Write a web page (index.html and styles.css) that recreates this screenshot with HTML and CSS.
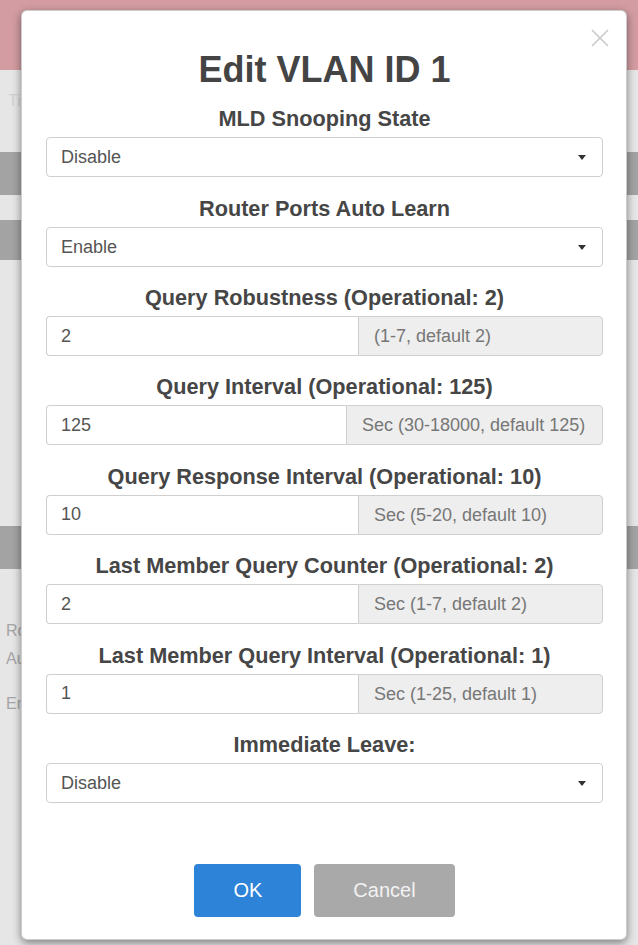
FILE: index.html
```
<!DOCTYPE html>
<html lang="en">
<head>
    <meta charset="UTF-8">
    <title>Edit VLAN ID 1</title>
    <link rel="stylesheet" href="styles.css">
</head>
<body>

    <!-- page behind the dialog -->
    <div class="page">
        <div class="topbar"></div>
        <div class="crumb">Tips</div>
        <div class="bar"></div>
        <div class="bar sub"></div>
        <div class="rows"></div>
        <div class="bar"></div>
        <div class="info">
            <p>Ro</p>
            <p>Au</p>
            <p class="gap">En</p>
        </div>
    </div>

    <div class="backdrop">
        <div class="modal">
            <a href="javascript:;" class="close">
                <svg width="18" height="18" viewBox="0 0 18 18"><path d="M1 1L17 17M17 1L1 17" stroke="#c9c9c9" stroke-width="1.6" fill="none"/></svg>
            </a>
            <h2 class="title">Edit VLAN ID 1</h2>

            <div class="group">
                <label>MLD Snooping State</label>
                <div class="select">Disable</div>
            </div>
            <div class="group">
                <label>Router Ports Auto Learn</label>
                <div class="select">Enable</div>
            </div>
            <div class="group">
                <label>Query Robustness (Operational: 2)</label>
                <div class="input-group">
                    <input type="text" value="2">
                    <span class="addon">(1-7, default 2)</span>
                </div>
            </div>
            <div class="group">
                <label>Query Interval (Operational: 125)</label>
                <div class="input-group">
                    <input type="text" value="125">
                    <span class="addon wide">Sec (30-18000, default 125)</span>
                </div>
            </div>
            <div class="group">
                <label>Query Response Interval (Operational: 10)</label>
                <div class="input-group">
                    <input type="text" value="10">
                    <span class="addon">Sec (5-20, default 10)</span>
                </div>
            </div>
            <div class="group">
                <label>Last Member Query Counter (Operational: 2)</label>
                <div class="input-group">
                    <input type="text" value="2">
                    <span class="addon">Sec (1-7, default 2)</span>
                </div>
            </div>
            <div class="group">
                <label>Last Member Query Interval (Operational: 1)</label>
                <div class="input-group">
                    <input type="text" value="1">
                    <span class="addon">Sec (1-25, default 1)</span>
                </div>
            </div>
            <div class="group">
                <label>Immediate Leave:</label>
                <div class="select">Disable</div>
            </div>

            <div class="actions">
                <button class="btn ok">OK</button>
                <button class="btn cancel">Cancel</button>
            </div>
        </div>
    </div>

</body>
</html>
```
FILE: styles.css
```
* {
    margin: 0;
    padding: 0;
    box-sizing: border-box;
}
body {
    width: 638px;
    height: 945px;
    overflow: hidden;
    position: relative;
    background: #e6e6e6;
    font-family: "Liberation Sans", Arial, sans-serif;
}

/* page under the overlay */
.topbar {
    height: 70px;
    background: #d29ca2;
}
.crumb {
    height: 82px;
    padding: 22px 8px;
    font-size: 16px;
    color: #d2d2d2;
}
.bar {
    height: 43px;
    background: #a3a3a3;
}
.bar.sub {
    height: 40px;
    margin-top: 25px;
}
.rows {
    height: 266px;
}
.info {
    padding: 48px 6px 0;
    font-size: 16px;
    line-height: 28px;
    color: #a5a5a5;
}
.info .gap {
    margin-top: 17px;
}

/* dialog */
.backdrop {
    position: absolute;
    top: 0;
    left: 0;
    right: 0;
    bottom: 0;
}
.modal {
    position: absolute;
    top: 10px;
    left: 21px;
    width: 606px;
    height: 930px;
    background: #fff;
    border: 1px solid rgba(0, 0, 0, .2);
    border-radius: 6px;
    box-shadow: 0 3px 9px rgba(0, 0, 0, .45);
    padding: 38.5px 23px 0 24px;
}
.close {
    position: absolute;
    top: 18px;
    right: 17px;
    width: 18px;
    height: 18px;
}
.close svg {
    display: block;
}
.title {
    font-size: 36px;
    line-height: 40px;
    font-weight: bold;
    text-align: center;
    color: #444;
    margin-bottom: 16.8px;
}
.group {
    margin-bottom: 18.4px;
}
.group label {
    display: block;
    text-align: center;
    font-size: 21.7px;
    font-weight: bold;
    line-height: 26px;
    color: #464646;
    margin-bottom: 5px;
}
.select {
    position: relative;
    height: 40px;
    border: 1px solid #cfcfcf;
    border-radius: 4px;
    padding: 0 14px;
    font-size: 18px;
    line-height: 38px;
    color: #555;
}
.select::after {
    content: "";
    position: absolute;
    right: 16px;
    top: 17px;
    border-left: 4px solid transparent;
    border-right: 4px solid transparent;
    border-top: 5px solid #333;
}
.input-group {
    display: flex;
    height: 40px;
}
.input-group input {
    flex: 1;
    min-width: 0;
    border: 1px solid #cfcfcf;
    border-right: 0;
    border-radius: 4px 0 0 4px;
    padding: 0 14px;
    font: 18px "Liberation Sans", Arial, sans-serif;
    color: #555;
    outline: none;
}
.addon {
    width: 245px;
    background: #eee;
    border: 1px solid #cfcfcf;
    border-radius: 0 4px 4px 0;
    padding: 0 15px;
    font-size: 18px;
    line-height: 38px;
    color: #777;
    white-space: nowrap;
}
.addon.wide {
    width: 257px;
}
.actions {
    display: flex;
    justify-content: center;
    gap: 13px;
    margin-top: 61px;
}
.btn {
    height: 53px;
    padding: 0 39px;
    border: 0;
    border-radius: 4px;
    font: 20px "Liberation Sans", Arial, sans-serif;
    color: #fff;
}
.ok {
    background: #2c83d8;
}
.cancel {
    background: #a9a9a9;
    color: #f2f2f2;
}
```
